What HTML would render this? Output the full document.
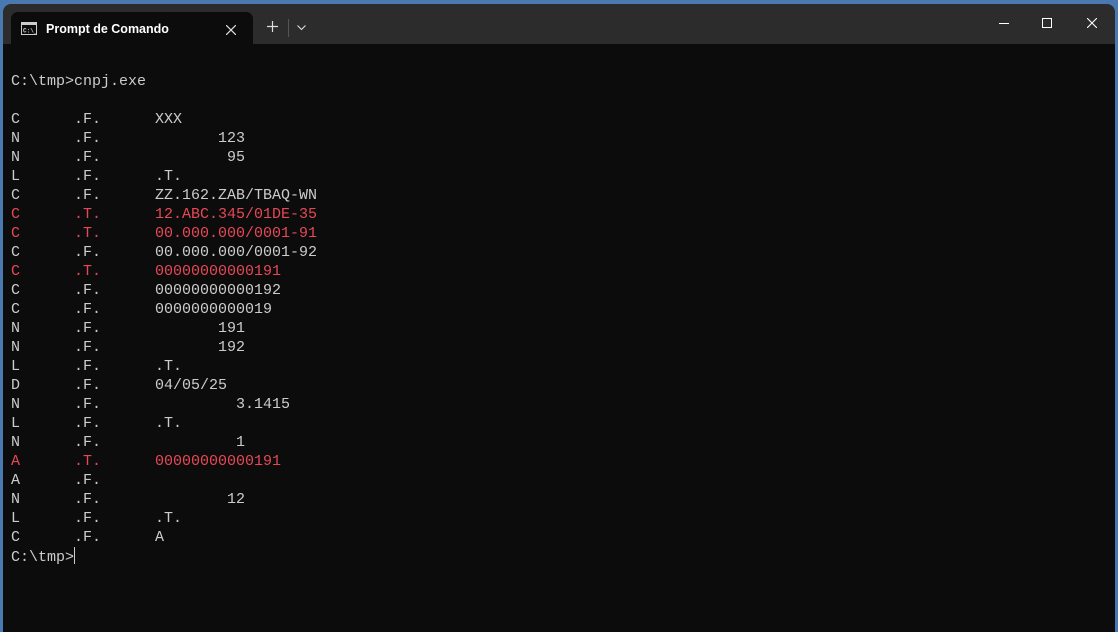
<!DOCTYPE html>
<html><head><style>
body{margin:0;width:1118px;height:632px;overflow:hidden;background:#4a78b0;font-family:"Liberation Sans",sans-serif}
.win{position:absolute;left:3px;top:4px;width:1112px;height:628px;background:#2c2c2c;border-radius:8px 8px 0 0;overflow:hidden}
.tab{position:absolute;left:8px;top:8px;width:242px;height:36px;background:#0c0c0c;border-radius:7px 7px 0 0;color:#fff;font-size:12.5px;font-weight:bold}
.term{position:absolute;left:0;top:40px;right:0;bottom:0;background:#0c0c0c}
pre{position:absolute;left:8px;top:28px;margin:0;font-family:"Liberation Mono",monospace;font-size:15px;line-height:19px;color:#cccccc}
.r{color:#e74856}
.cur{display:inline-block;width:1px;height:17px;background:#ccc;vertical-align:-3px}
</style></head><body>
<div class="win">
<div class="tab">
<svg style="position:absolute;left:10px;top:10px" width="16" height="13"><rect x="0.5" y="0.5" width="15" height="12" fill="none" stroke="#ccc"/><rect x="1" y="1" width="14" height="2" fill="#ccc"/><text x="2" y="10.5" font-size="6" fill="#ccc" font-family="Liberation Mono">C:\_</text></svg>
<span style="position:absolute;left:35px;top:10px">Prompt de Comando</span>
<svg style="position:absolute;left:215px;top:13px" width="10" height="10"><path d="M0 0L10 10M10 0L0 10" stroke="#ddd" stroke-width="1.2"/></svg>
</div>
<svg style="position:absolute;left:264px;top:17px" width="11" height="11"><path d="M5.5 0V11M0 5.5H11" stroke="#ddd" stroke-width="1.2"/></svg>
<div style="position:absolute;left:285px;top:15px;width:1px;height:18px;background:#555"></div>
<svg style="position:absolute;left:294px;top:21px" width="9" height="6"><path d="M0.5 0.5L4.5 4.5L8.5 0.5" fill="none" stroke="#ddd" stroke-width="1.1"/></svg>
<div style="position:absolute;left:996px;top:19px;width:10px;height:1px;background:#fff"></div>
<div style="position:absolute;left:1039px;top:14px;width:8px;height:8px;border:1px solid #fff"></div>
<svg style="position:absolute;left:1084px;top:14px" width="10" height="10"><path d="M0 0L10 10M10 0L0 10" stroke="#fff" stroke-width="1.1"/></svg>
<div class="term"><pre>C:\tmp&gt;cnpj.exe

C      .F.      XXX
N      .F.             123
N      .F.              95
L      .F.      .T.
C      .F.      ZZ.162.ZAB/TBAQ-WN
<span class="r">C      .T.      12.ABC.345/01DE-35</span>
<span class="r">C      .T.      00.000.000/0001-91</span>
C      .F.      00.000.000/0001-92
<span class="r">C      .T.      00000000000191</span>
C      .F.      00000000000192
C      .F.      0000000000019
N      .F.             191
N      .F.             192
L      .F.      .T.
D      .F.      04/05/25
N      .F.               3.1415
L      .F.      .T.
N      .F.               1
<span class="r">A      .T.      00000000000191</span>
A      .F.
N      .F.              12
L      .F.      .T.
C      .F.      A
C:\tmp&gt;<span class="cur"></span></pre></div>
</div>
</body></html>
